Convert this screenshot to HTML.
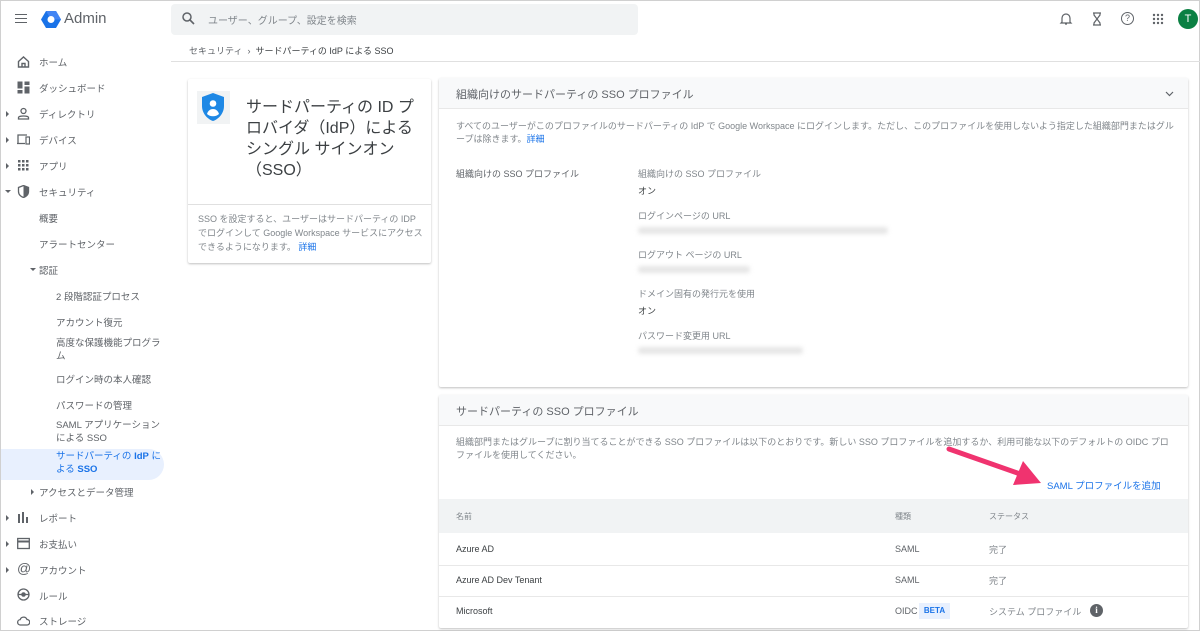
<!DOCTYPE html>
<html><head><meta charset="utf-8"><style>
*{box-sizing:border-box;margin:0;padding:0}
body{width:1200px;height:631px;overflow:hidden;background:#fff;font-family:"Liberation Sans","Noto Sans CJK JP",sans-serif;color:#3c4043;position:relative;border:1px solid #d0d0d0}
.a{position:absolute}
.nav{position:absolute;left:0;font-size:9.5px;color:#5f6368;white-space:nowrap}
.ic{position:absolute;left:16px;width:13px;height:13px}
.tri{position:absolute;left:5px;width:0;height:0;border-left:3px solid #5f6368;border-top:3px solid transparent;border-bottom:3px solid transparent}
.card{position:absolute;background:#fff;box-shadow:0 1px 2px rgba(0,0,0,.25);border-radius:2px}
.lbl{font-size:9px;color:#80868b}
.blur{background:#e6e6e6;filter:blur(2px);height:7px;border-radius:3px}
</style></head><body>
<div class="a" style="left:14px;top:13px;width:12px;height:9px;border-top:1.5px solid #5f6368;border-bottom:1.5px solid #5f6368"><div style="margin-top:2.5px;border-top:1.5px solid #5f6368"></div></div>
<svg class="a" style="left:40px;top:9px" width="20" height="19" viewBox="0 0 20 19"><polygon points="5,1 15,1 20,9.5 15,18 5,18 0,9.5" fill="#1a73e8"/><polygon points="5,1 15,1 20,9.5 10,9.5" fill="#4285f4"/><circle cx="10" cy="9.5" r="3.5" fill="#fff"/></svg>
<div class="a" style="left:63px;top:9px;font-size:15px;color:#5f6368">Admin</div>
<div class="a" style="left:170px;top:3px;width:467px;height:31px;background:#f1f3f4;border-radius:4px"></div>
<svg class="a" style="left:181px;top:11px" width="13" height="13" viewBox="0 0 13 13"><circle cx="5" cy="5" r="4" fill="none" stroke="#5f6368" stroke-width="1.5"/><line x1="8" y1="8" x2="12" y2="12" stroke="#5f6368" stroke-width="1.6"/></svg>
<div class="a" style="left:207px;top:11px;font-size:10px;color:#80868b">ユーザー、グループ、設定を検索</div>
<svg class="a" style="left:1058px;top:11px" width="14" height="14" viewBox="0 0 14 14"><path d="M3 10V6a4 4 0 0 1 8 0v4l1 1H2z M6 12h2" fill="none" stroke="#5f6368" stroke-width="1.2"/></svg>
<svg class="a" style="left:1090px;top:11px" width="12" height="14" viewBox="0 0 12 14"><path d="M2 1h8M2 13h8M3 1v2l3 4-3 4v2M9 1v2L6 7l3 4v2" fill="none" stroke="#5f6368" stroke-width="1.2"/></svg>
<div class="a" style="left:1120px;top:11px;width:13px;height:13px;border:1.3px solid #5f6368;border-radius:50%;font-size:9px;text-align:center;line-height:11px;color:#5f6368">?</div>
<svg class="a" style="left:1151px;top:12px" width="12" height="12" viewBox="0 0 12 12" fill="#5f6368"><circle cx="2" cy="2" r="1.2"/><circle cx="6" cy="2" r="1.2"/><circle cx="10" cy="2" r="1.2"/><circle cx="2" cy="6" r="1.2"/><circle cx="6" cy="6" r="1.2"/><circle cx="10" cy="6" r="1.2"/><circle cx="2" cy="10" r="1.2"/><circle cx="6" cy="10" r="1.2"/><circle cx="10" cy="10" r="1.2"/></svg>
<div class="a" style="left:1177px;top:8px;width:20px;height:20px;border-radius:50%;background:#0b8043;color:#fff;font-size:11px;text-align:center;line-height:20px">T</div>
<div class="a" style="left:188px;top:43px;font-size:9px;color:#5f6368">セキュリティ&nbsp; ›&nbsp; <span style="color:#3c4043">サードパーティの IdP による SSO</span></div>
<div class="a" style="left:170px;top:60px;width:1030px;height:1px;background:#e0e0e0"></div>
<svg class="ic" style="top:54px" viewBox="0 0 13 13"><path d="M1.5 6.5L6.5 2l5 4.5V12h-10z M5 12V8.5h3V12" fill="none" stroke="#5f6368" stroke-width="1.4"/></svg>
<div class="nav" style="left:38px;top:54px">ホーム</div>
<svg class="ic" style="top:80px" viewBox="0 0 13 13" fill="#5f6368"><rect x="0.5" y="0.5" width="5" height="7"/><rect x="7.5" y="0.5" width="5" height="3.5"/><rect x="0.5" y="9" width="5" height="3.5"/><rect x="7.5" y="5.5" width="5" height="7"/></svg>
<div class="nav" style="left:38px;top:80px">ダッシュボード</div>
<div class="tri" style="top:110px"></div>
<svg class="ic" style="top:106px" viewBox="0 0 13 13"><circle cx="6.5" cy="4" r="2.5" fill="none" stroke="#5f6368" stroke-width="1.3"/><path d="M1.5 12v-1.5c0-2 10-2 10 0V12z" fill="none" stroke="#5f6368" stroke-width="1.3"/></svg>
<div class="nav" style="left:38px;top:106px">ディレクトリ</div>
<div class="tri" style="top:136px"></div>
<svg class="ic" style="top:132px" viewBox="0 0 13 13"><path d="M1 10V2h9M0 10.5h8" fill="none" stroke="#5f6368" stroke-width="1.3"/><rect x="9" y="4" width="3.5" height="7" fill="none" stroke="#5f6368" stroke-width="1.2"/></svg>
<div class="nav" style="left:38px;top:132px">デバイス</div>
<div class="tri" style="top:162px"></div>
<svg class="ic" style="top:158px" viewBox="0 0 13 13" fill="#5f6368"><rect x="1" y="1" width="2.5" height="2.5"/><rect x="5" y="1" width="2.5" height="2.5"/><rect x="9" y="1" width="2.5" height="2.5"/><rect x="1" y="5" width="2.5" height="2.5"/><rect x="5" y="5" width="2.5" height="2.5"/><rect x="9" y="5" width="2.5" height="2.5"/><rect x="1" y="9" width="2.5" height="2.5"/><rect x="5" y="9" width="2.5" height="2.5"/><rect x="9" y="9" width="2.5" height="2.5"/></svg>
<div class="nav" style="left:38px;top:158px">アプリ</div>
<div class="a" style="left:4px;top:189px;border-top:3px solid #5f6368;border-left:3px solid transparent;border-right:3px solid transparent"></div>
<svg class="ic" style="top:184px" viewBox="0 0 13 13"><path d="M6.5 0.5L1.5 2.5v4c0 3 2.3 5.3 5 6 2.7-.7 5-3 5-6v-4z" fill="none" stroke="#5f6368" stroke-width="1.3"/><path d="M6.5 0.5v12c2.7-.7 5-3 5-6v-4z" fill="#5f6368"/></svg>
<div class="nav" style="left:38px;top:184px">セキュリティ</div>
<div class="nav" style="left:38px;top:210px">概要</div>
<div class="nav" style="left:38px;top:236px">アラートセンター</div>
<div class="a" style="left:29px;top:267px;border-top:3px solid #5f6368;border-left:3px solid transparent;border-right:3px solid transparent"></div>
<div class="nav" style="left:38px;top:262px">認証</div>
<div class="nav" style="left:55px;top:288px">2 段階認証プロセス</div>
<div class="nav" style="left:55px;top:314px">アカウント復元</div>
<div class="nav" style="left:55px;top:336px;line-height:13px">高度な保護機能プログラ<br>ム</div>
<div class="nav" style="left:55px;top:371px">ログイン時の本人確認</div>
<div class="nav" style="left:55px;top:397px">パスワードの管理</div>
<div class="nav" style="left:55px;top:418px;line-height:13px">SAML アプリケーション<br>による SSO</div>
<div class="a" style="left:0;top:448px;width:163px;height:31px;background:#e8f0fe;border-radius:0 16px 16px 0"></div>
<div class="nav" style="left:55px;top:449px;line-height:13px;color:#1a73e8">サードパーティの <b>IdP</b> に<br>よる <b>SSO</b></div>
<div class="tri" style="left:30px;top:488px"></div>
<div class="nav" style="left:38px;top:484px">アクセスとデータ管理</div>
<div class="tri" style="top:514px"></div>
<svg class="ic" style="top:510px" viewBox="0 0 13 13" fill="#5f6368"><rect x="1" y="3" width="2" height="9"/><rect x="5" y="1" width="2" height="11"/><rect x="9" y="6" width="2" height="6"/></svg>
<div class="nav" style="left:38px;top:510px">レポート</div>
<div class="tri" style="top:540px"></div>
<svg class="ic" style="top:536px" viewBox="0 0 13 13"><rect x="0.7" y="1.5" width="11.6" height="10" fill="none" stroke="#5f6368" stroke-width="1.3"/><rect x="0.7" y="3.5" width="11.6" height="2" fill="#5f6368"/></svg>
<div class="nav" style="left:38px;top:536px">お支払い</div>
<div class="tri" style="top:566px"></div>
<div class="ic" style="top:561px;font-size:14px;line-height:13px;color:#5f6368">@</div>
<div class="nav" style="left:38px;top:562px">アカウント</div>
<svg class="ic" style="top:587px" viewBox="0 0 13 13"><circle cx="6.5" cy="6.5" r="5.5" fill="none" stroke="#5f6368" stroke-width="1.3"/><circle cx="6.5" cy="6.5" r="2.3" fill="#5f6368"/><path d="M1 6.5h11" stroke="#5f6368" stroke-width="1.3"/></svg>
<div class="nav" style="left:38px;top:588px">ルール</div>
<svg class="ic" style="top:613px" viewBox="0 0 13 13"><path d="M3.5 11a2.7 2.7 0 0 1-.3-5.4A3.6 3.6 0 0 1 10 5.5 2.7 2.7 0 0 1 10 11z" fill="none" stroke="#5f6368" stroke-width="1.3"/></svg>
<div class="nav" style="left:38px;top:613px">ストレージ</div>
<div class="card" style="left:187px;top:78px;width:243px;height:184px"></div>
<div class="a" style="left:196px;top:90px;width:33px;height:33px;background:#f1f3f4"></div>
<svg class="a" style="left:200px;top:91px" width="24" height="30" viewBox="0 0 24 30"><path d="M12 1L1 5v9c0 7 5 13 11 15 6-2 11-8 11-15V5z" fill="#1e88e5"/><circle cx="12" cy="11.5" r="3.3" fill="#fff"/><path d="M6 22c1-3.5 3.5-5 6-5s5 1.5 6 5a9 9 0 0 1-12 0z" fill="#fff"/></svg>
<div class="a" style="left:245px;top:96px;font-size:16px;line-height:21px;color:#3c4043;width:180px">サードパーティの ID プロバイダ（IdP）による<br>シングル サインオン<br>（SSO）</div>
<div class="a" style="left:187px;top:203px;width:243px;height:1px;background:#e0e0e0"></div>
<div class="a" style="left:197px;top:211px;font-size:9px;line-height:14px;color:#80868b;width:226px">SSO を設定すると、ユーザーはサードパーティの IDP でログインして Google Workspace サービスにアクセスできるようになります。 <span style="color:#1a73e8">詳細</span></div>
<div class="card" style="left:438px;top:77px;width:749px;height:309px"></div>
<div class="a" style="left:438px;top:77px;width:749px;height:31px;background:#f8f9fa;border-bottom:1px solid #e8e8e8"></div>
<div class="a" style="left:455px;top:85px;font-size:11px;color:#5f6368">組織向けのサードパーティの SSO プロファイル</div>
<svg class="a" style="left:1164px;top:90px" width="9" height="6" viewBox="0 0 9 6"><path d="M1 1l3.5 3.5L8 1" fill="none" stroke="#5f6368" stroke-width="1.2"/></svg>
<div class="a" style="left:455px;top:119px;font-size:9px;line-height:13px;color:#80868b;width:720px">すべてのユーザーがこのプロファイルのサードパーティの IdP で Google Workspace にログインします。ただし、このプロファイルを使用しないよう指定した組織部門またはグループは除きます。<span style="color:#1a73e8">詳細</span></div>
<div class="a" style="left:455px;top:166px;font-size:9px;color:#5f6368">組織向けの SSO プロファイル</div>
<div class="a lbl" style="left:637px;top:166px">組織向けの SSO プロファイル</div>
<div class="a" style="left:637px;top:183px;font-size:9px;color:#3c4043">オン</div>
<div class="a lbl" style="left:637px;top:208px">ログインページの URL</div>
<div class="a blur" style="left:637px;top:226px;width:250px"></div>
<div class="a lbl" style="left:637px;top:247px">ログアウト ページの URL</div>
<div class="a blur" style="left:637px;top:265px;width:112px"></div>
<div class="a lbl" style="left:637px;top:286px">ドメイン固有の発行元を使用</div>
<div class="a" style="left:637px;top:303px;font-size:9px;color:#3c4043">オン</div>
<div class="a lbl" style="left:637px;top:328px">パスワード変更用 URL</div>
<div class="a blur" style="left:637px;top:346px;width:165px"></div>
<div class="card" style="left:438px;top:394px;width:749px;height:233px"></div>
<div class="a" style="left:438px;top:394px;width:749px;height:31px;background:#f8f9fa;border-bottom:1px solid #e8e8e8"></div>
<div class="a" style="left:455px;top:402px;font-size:11px;color:#5f6368">サードパーティの SSO プロファイル</div>
<div class="a" style="left:455px;top:435px;font-size:9px;line-height:13px;color:#80868b;width:720px">組織部門またはグループに割り当てることができる SSO プロファイルは以下のとおりです。新しい SSO プロファイルを追加するか、利用可能な以下のデフォルトの OIDC プロファイルを使用してください。</div>
<div class="a" style="left:1046px;top:477px;font-size:9.5px;color:#1a73e8">SAML プロファイルを追加</div>
<div class="a" style="left:438px;top:498px;width:749px;height:34px;background:#f1f3f4"></div>
<div class="a lbl" style="left:455px;top:510px;font-size:8px">名前</div>
<div class="a lbl" style="left:894px;top:510px;font-size:8px">種類</div>
<div class="a lbl" style="left:988px;top:510px;font-size:8px">ステータス</div>
<div class="a" style="left:438px;top:564px;width:749px;height:1px;background:#e8e8e8"></div>
<div class="a" style="left:438px;top:595px;width:749px;height:1px;background:#e8e8e8"></div>
<div class="a" style="left:455px;top:543px;font-size:9px;color:#3c4043">Azure AD</div>
<div class="a" style="left:894px;top:543px;font-size:9px;color:#5f6368">SAML</div>
<div class="a" style="left:988px;top:542px;font-size:9px;color:#80868b">完了</div>
<div class="a" style="left:455px;top:574px;font-size:9px;color:#3c4043">Azure AD Dev Tenant</div>
<div class="a" style="left:894px;top:574px;font-size:9px;color:#5f6368">SAML</div>
<div class="a" style="left:988px;top:573px;font-size:9px;color:#80868b">完了</div>
<div class="a" style="left:455px;top:605px;font-size:9px;color:#3c4043">Microsoft</div>
<div class="a" style="left:894px;top:605px;font-size:9px;color:#5f6368">OIDC</div>
<div class="a" style="left:918px;top:602px;width:31px;height:16px;background:#e8f0fe;font-size:8px;font-weight:bold;color:#1a73e8;text-align:center;line-height:16px">BETA</div>
<div class="a" style="left:988px;top:604px;font-size:9px;color:#80868b">システム プロファイル</div>
<div class="a" style="left:1089px;top:603px;width:13px;height:13px;border-radius:50%;background:#5f6368;color:#fff;font-size:9px;font-weight:bold;text-align:center;line-height:13px;font-family:'Liberation Serif',serif">i</div>
<svg class="a" style="left:940px;top:440px" width="110" height="50" viewBox="0 0 110 50"><line x1="8" y1="8" x2="82" y2="34" stroke="#f0336f" stroke-width="5" stroke-linecap="round"/><polygon points="100,42 72,44 82,20" fill="#f0336f"/></svg>
</body></html>
